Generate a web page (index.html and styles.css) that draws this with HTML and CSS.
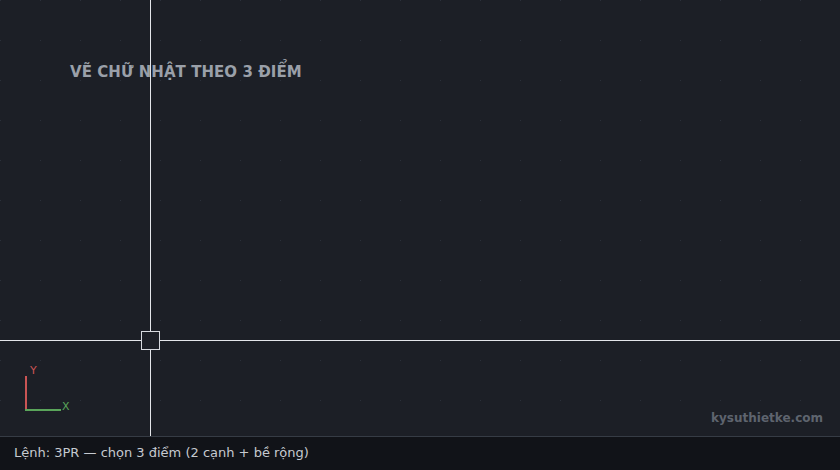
FILE: index.html
```html
<!DOCTYPE html>
<html lang="vi">
<head>
<meta charset="utf-8">
<title>3PR</title>
<link rel="stylesheet" href="styles.css">
</head>
<body>
<div class="app">
  <div class="viewport">
    <div class="title">VẼ CHỮ NHẬT THEO 3 ĐIỂM</div>
    <div class="cross-v"></div>
    <div class="cross-h"></div>
    <div class="pickbox"></div>
    <div class="ucs">
      <span class="ucs-y"></span>
      <span class="ucs-x"></span>
      <span class="ucs-label-y">Y</span>
      <span class="ucs-label-x">X</span>
    </div>
    <div class="brand">kysuthietke.com</div>
  </div>
  <div class="cmdline">Lệnh: 3PR — chọn 3 điểm (2 cạnh + bề rộng)</div>
</div>
</body>
</html>
```
FILE: styles.css
```css
* { box-sizing: border-box; }
html, body {
  margin: 0;
  width: 840px;
  height: 470px;
  overflow: hidden;
  background: #1c1f26;
  font-family: "DejaVu Sans", sans-serif;
}
.app {
  display: flex;
  flex-direction: column;
  width: 840px;
  height: 470px;
}
/* drawing area with a 40px snap grid of single-pixel dots:
   the top layer masks every column but the first of each cell,
   the lower layer colours the first row, leaving one dot per cell */
.viewport {
  position: relative;
  flex: 1;
  background-color: #1c1f26;
  background-image:
    linear-gradient(to right, transparent 1px, #1c1f26 1px),
    linear-gradient(to bottom, #2b303a 1px, transparent 1px);
  background-size: 40px 40px, 40px 40px;
  background-position: 0 0, 0 0;
  overflow: hidden;
}
.title {
  position: absolute;
  left: 70px;
  top: 63px;
  font-size: 15px;
  font-weight: bold;
  color: #9aa0a9;
  letter-spacing: 0.05px;
}
.cross-v {
  position: absolute;
  left: 150px;
  top: 0;
  bottom: 0;
  width: 1px;
  background: #e4e6ea;
}
.cross-h {
  position: absolute;
  left: 0;
  right: 0;
  top: 340px;
  height: 1px;
  background: #e4e6ea;
}
.pickbox {
  position: absolute;
  left: 141px;
  top: 331px;
  width: 19px;
  height: 19px;
  border: 1px solid #d6d9de;
  background: #1c1f26;
}
.ucs {
  position: absolute;
  left: 0;
  top: 0;
}
.ucs-y {
  position: absolute;
  left: 25px;
  top: 376px;
  width: 2px;
  height: 35px;
  background: #c95454;
}
.ucs-x {
  position: absolute;
  left: 25px;
  top: 409px;
  width: 36px;
  height: 2px;
  background: #5aa55a;
}
.ucs-label-y, .ucs-label-x {
  position: absolute;
  font-size: 11px;
  line-height: 11px;
}
.ucs-label-y { left: 30px; top: 365px; color: #c95454; }
.ucs-label-x { left: 62px; top: 401px; color: #5aa55a; }
.brand {
  position: absolute;
  right: 17px;
  top: 411px;
  font-size: 12px;
  font-weight: bold;
  color: #5e646e;
}
.cmdline {
  height: 34px;
  flex: none;
  background: #111318;
  border-top: 1px solid #363c45;
  padding: 8px 14px 0;
  font-size: 13px;
  line-height: 15px;
  color: #c6cad0;
}
```
